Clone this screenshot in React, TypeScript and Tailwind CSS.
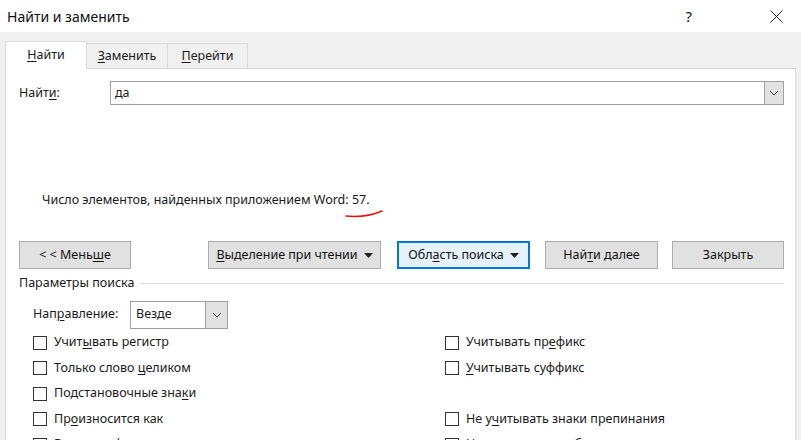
import React from "react";

// Accelerator letter, underlined like in the Windows dialog
function U({ children }: { children: React.ReactNode }) {
  return <span className="underline underline-offset-2">{children}</span>;
}

function Arrow() {
  return (
    <svg width="9" height="5" viewBox="0 0 9 5" className="ml-[6px]">
      <path d="M0 0h9L4.5 5z" fill="#222" />
    </svg>
  );
}

function Chevron() {
  return (
    <svg width="10" height="6" viewBox="0 0 10 6">
      <path d="M1 1l4 4 4-4" fill="none" stroke="#444" strokeWidth="1" />
    </svg>
  );
}

function Check({ children }: { children: React.ReactNode }) {
  return (
    <div className="flex h-[25.5px] items-center">
      <span className="block h-[14px] w-[14px] border border-[#333] bg-white" />
      <span className="ml-[7px]">{children}</span>
    </div>
  );
}

const btn =
  "flex h-[28px] items-center justify-center border border-[#adadad] bg-[#e1e1e1] text-[#111]";

export default function App() {
  return (
    <div
      className="h-[440px] w-[801px] overflow-hidden bg-white text-[12.5px] text-[#1a1a1a]"
      style={{ fontFamily: '"Noto Sans", "Open Sans", sans-serif' }}
    >
      {/* Title bar */}
      <div className="flex h-[32px] items-center bg-white">
        <div className="ml-[7px] text-[14px] text-[#111]">Найти и заменить</div>
        <div className="ml-auto mr-[78px] text-[15px]">?</div>
        <svg width="13" height="13" viewBox="0 0 13 13" className="mr-[18px]">
          <path d="M0.5 0.5l12 12M12.5 0.5l-12 12" stroke="#222" strokeWidth="1" />
        </svg>
      </div>

      {/* Tabs + panel */}
      <div className="h-[408px] bg-[#f0f0f0] px-[5px] pt-[9px]">
        <div className="flex h-[27px] items-end">
          <div className="relative z-10 -mb-px flex h-[28px] w-[82px] items-center justify-center border border-b-0 border-[#d9d9d9] bg-white">
            <U>Н</U>айти
          </div>
          <div className="flex h-[25px] w-[81px] items-center justify-center border border-l-0 border-b-0 border-[#d9d9d9] bg-[#f0f0f0]">
            <U>З</U>аменить
          </div>
          <div className="flex h-[25px] w-[80px] items-center justify-center border border-l-0 border-b-0 border-[#d9d9d9] bg-[#f0f0f0]">
            <U>П</U>ерейти
          </div>
        </div>

        <div className="h-[380px] border border-b-0 border-[#d9d9d9] bg-white pl-[13px] pr-[11px] pt-[12px]">
          {/* Find row */}
          <div className="flex h-[24px] items-center">
            <div className="w-[91px]">
              Найт<U>и</U>:
            </div>
            <div className="flex h-[24px] flex-1 items-center border border-[#a0a0a0]">
              <span className="pl-[4px]">да</span>
              <div className="ml-auto flex h-[22px] w-[19px] items-center justify-center border-l border-[#a0a0a0] bg-[#e1e1e1]">
                <Chevron />
              </div>
            </div>
          </div>

          {/* Result message */}
          <div className="relative mt-[85px] h-[20px] pl-[23px] leading-[20px]">
            Число элементов, найденных приложением Word: 57.
            <svg width="40" height="10" viewBox="0 0 40 10" className="absolute left-[326px] top-[19px]">
              <path d="M1 7c10 1 22 1 36-5" fill="none" stroke="#e11" strokeWidth="1.6" strokeLinecap="round" />
            </svg>
          </div>

          {/* Buttons */}
          <div className="mt-[31px] flex items-center">
            <div className={`${btn} w-[112px]`}>
              &lt; &lt; Мень<U>ш</U>е
            </div>
            <div className={`${btn} ml-[77px] w-[173px]`}>
              <U>В</U>ыделение при чтении
              <Arrow />
            </div>
            <div className="ml-[16px] flex h-[28px] w-[133px] items-center justify-center border-2 border-[#0078d7] bg-[#e5f1fb] text-[#111]">
              Обл<U>а</U>сть поиска
              <Arrow />
            </div>
            <div className={`${btn} ml-[15px] w-[113px]`}>
              Най<U>т</U>и далее
            </div>
            <div className={`${btn} ml-[14px] w-[112px]`}>Закрыть</div>
          </div>

          {/* Search options group */}
          <div className="mt-[5px] flex items-center">
            <span>Параметры поиска</span>
            <div className="ml-[6px] h-px flex-1 bg-[#dcdcdc]" />
          </div>

          <div className="mt-[8px] flex h-[28px] items-center pl-[14px]">
            <div className="w-[97px]">
              Нап<U>р</U>авление:
            </div>
            <div className="flex h-[28px] w-[98px] items-center border border-[#a0a0a0]">
              <span className="pl-[5px]">Везде</span>
              <div className="ml-auto flex h-[26px] w-[22px] items-center justify-center border-l border-[#a0a0a0] bg-[#e1e1e1]">
                <Chevron />
              </div>
            </div>
          </div>

          <div className="mt-[1px] grid grid-cols-[412px_1fr] pl-[14px]">
            <Check>
              Учит<U>ы</U>вать регистр
            </Check>
            <Check>
              Учитывать пр<U>е</U>фикс
            </Check>
            <Check>
              Только слово <U>ц</U>еликом
            </Check>
            <Check>
              <U>У</U>читывать суффикс
            </Check>
            <Check>
              Подстановочные зна<U>к</U>и
            </Check>
            <div className="h-[25.5px]" />
            <Check>
              Пр<U>о</U>износится как
            </Check>
            <Check>
              Не у<U>ч</U>итывать знаки препинания
            </Check>
            <Check>Все словоформы</Check>
            <Check>Не учитывать пробелы</Check>
          </div>
        </div>
      </div>
    </div>
  );
}
